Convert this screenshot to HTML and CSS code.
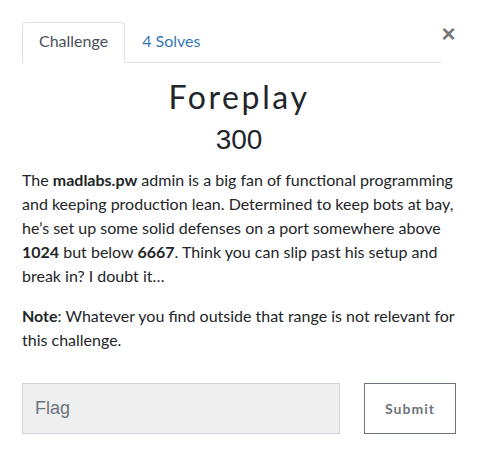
FILE: index.html
```html
<!DOCTYPE html>
<html>
<head>
<meta charset="utf-8">
<link rel="stylesheet" href="styles.css">
</head>
<body>
<div class="modal">
  <div class="head">
    <ul class="tabs">
      <li class="tab active">Challenge</li>
      <li class="tab link">4 Solves</li>
    </ul>
    <button class="close" aria-label="Close">&times;</button>
  </div>
  <h2 class="title">Foreplay</h2>
  <h3 class="value">300</h3>
  <div class="desc">
    <p>The <strong>madlabs.pw</strong> admin is a big fan of functional programming and keeping production lean. Determined to keep bots at bay, he’s set up some solid defenses on a port somewhere above <strong>1024</strong> but below <strong>6667</strong>. Think you can slip past his setup and break in? I doubt it…</p>
    <p><strong>Note</strong>: Whatever you find outside that range is not relevant for this challenge.</p>
  </div>
  <form class="flag-form">
    <input class="flag-input" type="text" placeholder="Flag">
    <button class="submit" type="button">Submit</button>
  </form>
</div>
</body>
</html>
```
FILE: styles.css
```css
html, body {
  margin: 0;
  padding: 0;
  background: #fff;
}
body {
  font-family: Lato, "Noto Sans", sans-serif;
  font-size: 16px;
  line-height: 24px;
  color: #232629;
}
.modal {
  padding: 22px 23px 0 22px;
}
.head {
  display: flex;
  align-items: flex-start;
}
.tabs {
  flex: 1;
  display: flex;
  list-style: none;
  margin: 0;
  padding: 0;
  border-bottom: 1px solid #dee2e6;
}
.tab {
  padding: 6px 16px 10px;
  margin-bottom: -1px;
  border: 1px solid transparent;
  border-top-left-radius: 4px;
  border-top-right-radius: 4px;
  font-size: 16px;
  line-height: 23px;
}
.tab.active {
  color: #495057;
  border-color: #dee2e6 #dee2e6 #fff;
  background: #fff;
}
.tab.link {
  color: #337ab7;
}
.close {
  width: 15px;
  padding: 0;
  margin: 2px 0 0;
  border: 0;
  background: none;
  font-family: "Liberation Sans", Arial, sans-serif;
  font-size: 24px;
  font-weight: 700;
  line-height: 20px;
  color: #777;
  cursor: pointer;
}
.title {
  margin: 15px 0 0;
  text-align: center;
  font-family: Lato, sans-serif;
  font-weight: 400;
  font-size: 32px;
  line-height: 38px;
  letter-spacing: 2.6px;
  color: #212529;
}
.value {
  margin: 7px 0 0;
  text-align: center;
  font-family: "Liberation Sans", Arial, sans-serif;
  font-weight: 400;
  font-size: 28px;
  line-height: 34px;
  color: #212529;
}
.desc {
  margin-top: 11px;
}
.desc p {
  margin: 0 0 16px;
}
.desc strong {
  font-weight: 700;
}
.flag-form {
  display: flex;
  gap: 24px;
  margin-top: 31px;
}
.flag-input {
  flex: 1;
  height: 51px;
  box-sizing: border-box;
  margin: 0;
  padding: 0 12px;
  border: 1px solid #ced4da;
  background: #efefef;
  font-family: "Liberation Sans", Arial, sans-serif;
  font-size: 18px;
  color: #495057;
  outline: none;
}
.flag-input::placeholder {
  color: #6c757d;
}
.submit {
  width: 92px;
  height: 51px;
  box-sizing: border-box;
  margin: 0;
  border: 1px solid #6c757d;
  background: #fff;
  font-family: Lato, sans-serif;
  font-weight: 700;
  font-size: 14px;
  letter-spacing: 1px;
  color: #6c757d;
}
```
